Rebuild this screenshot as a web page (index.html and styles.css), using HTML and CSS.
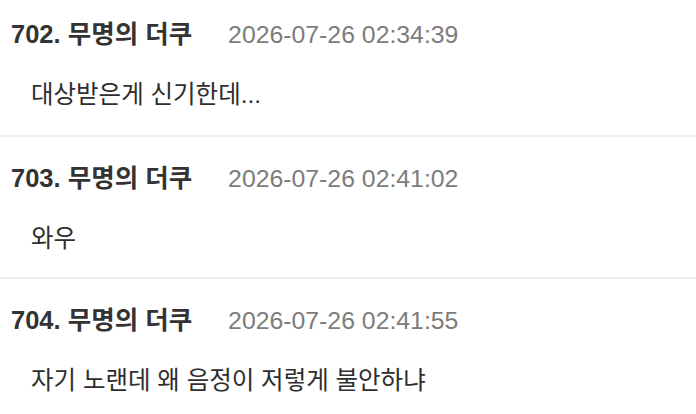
FILE: index.html
```html
<!DOCTYPE html>
<html lang="ko">
<head>
    <meta charset="UTF-8">
    <meta name="viewport" content="width=device-width, initial-scale=1.0">
    <title>댓글</title>
    <link rel="stylesheet" href="styles.css">
</head>
<body>
    <ul class="comments">
        <li class="comment">
            <div class="comment-head">
                <span class="author">702. 무명의 더쿠</span>
                <span class="date">2026-07-26 02:34:39</span>
            </div>
            <p class="comment-body">대상받은게 신기한데...</p>
        </li>
        <li class="comment">
            <div class="comment-head">
                <span class="author">703. 무명의 더쿠</span>
                <span class="date">2026-07-26 02:41:02</span>
            </div>
            <p class="comment-body">와우</p>
        </li>
        <li class="comment">
            <div class="comment-head">
                <span class="author">704. 무명의 더쿠</span>
                <span class="date">2026-07-26 02:41:55</span>
            </div>
            <p class="comment-body">자기 노랜데 왜 음정이 저렇게 불안하냐</p>
        </li>
    </ul>
</body>
</html>
```

FILE: styles.css
```css
body {
    margin: 0;
    background: #fff;
    font-family: "Liberation Sans", "Noto Sans CJK KR", sans-serif;
    color: #333;
}

.comments {
    list-style: none;
    margin: 0;
    padding: 0;
}

.comment {
    height: 142px;
    box-sizing: border-box;
    padding: 25px 11px 0;
    border-bottom: 2px solid #eeeeee;
    overflow: hidden;
}

/* first one is scrolled a little past the top */
.comment:first-child {
    height: 137px;
    padding-top: 18px;
}

.comment-head {
    display: flex;
    align-items: baseline;
    gap: 36px;
    height: 32px;
    line-height: 32px;
}

.author {
    font-size: 25.5px;
    font-weight: bold;
    color: #333;
}

.date {
    font-size: 24.8px;
    color: #7c7c7c;
}

.comment-body {
    margin: 29px 0 0 20px;
    font-size: 24.5px;
    line-height: 32px;
    color: #2e2e2e;
}
```
